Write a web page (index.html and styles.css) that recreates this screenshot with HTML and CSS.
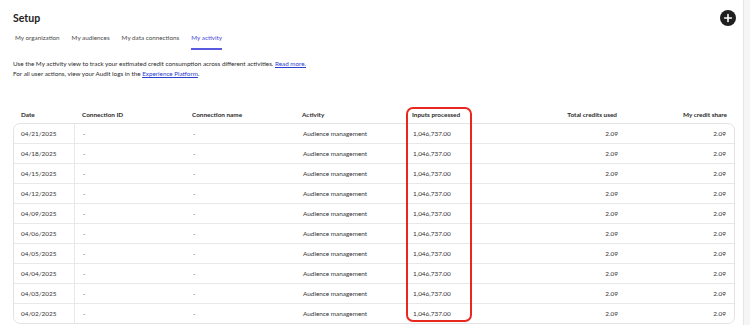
FILE: index.html
```html
<!DOCTYPE html>
<html lang="en">
<head>
    <meta charset="UTF-8">
    <title>Setup - My activity</title>
    <link rel="stylesheet" href="styles.css">
</head>
<body>
<div class="page">
    <div class="top">
        <h1>Setup</h1>
        <button class="add-btn" aria-label="Add">
            <svg width="16" height="16" viewBox="0 0 16 16">
                <circle cx="8" cy="8" r="8" fill="#1f1f1f"/>
                <path d="M8 4.6v6.8M4.6 8h6.8" stroke="#fff" stroke-width="1.6" stroke-linecap="round"/>
            </svg>
        </button>
    </div>

    <nav class="tabs">
        <a>My organization</a>
        <a>My audiences</a>
        <a>My data connections</a>
        <a class="active">My activity</a>
    </nav>

    <p class="intro">
        Use the My activity view to track your estimated credit consumption across different activities. <a href="#">Read more.</a><br>
        For all user actions, view your Audit logs in the <a href="#">Experience Platform</a>.
    </p>

    <div class="activity">
        <div class="row head">
            <div>Date</div>
            <div>Connection ID</div>
            <div>Connection name</div>
            <div>Activity</div>
            <div>Inputs processed</div>
            <div class="num">Total credits used</div>
            <div class="num">My credit share</div>
        </div>
        <div class="body" id="rows"></div>
        <div class="highlight"></div>
    </div>
</div>
<div class="side"></div>

<script>
    const dates = ["04/21/2025", "04/18/2025", "04/15/2025", "04/12/2025", "04/09/2025",
        "04/06/2025", "04/05/2025", "04/04/2025", "04/03/2025", "04/02/2025"];

    const rows = document.getElementById('rows');
    dates.forEach(d => {
        const r = document.createElement('div');
        r.className = 'row';
        r.innerHTML = `<div>${d}</div><div>-</div><div>-</div><div>Audience management</div>` +
            `<div>1,046,737.00</div><div class="num">2.09</div><div class="num">2.09</div>`;
        rows.appendChild(r);
    });
</script>
</body>
</html>
```

FILE: styles.css
```css
* {
    box-sizing: border-box;
}
body {
    margin: 0;
    font-family: Lato, "Open Sans", sans-serif;
    color: #222;
    background: #fff;
    overflow: hidden;
}
.page {
    width: 735px;
    padding: 0 0 0 13px;
}
.side {
    position: fixed;
    top: 0;
    right: 0;
    width: 7px;
    height: 100%;
    background: #f5f5f5;
    border-left: 1px solid #e6e6e6;
}
.top {
    display: flex;
    align-items: center;
    justify-content: space-between;
    height: 35px;
    padding-top: 1px;
}
h1 {
    margin: 0;
    font-size: 10.5px;
    font-weight: 700;
    color: #222;
}
.add-btn {
    border: 0;
    background: none;
    padding: 0;
    width: 16px;
    height: 16px;
    display: block;
    margin-right: -1px;
}
.tabs {
    display: flex;
    gap: 12px;
    padding-left: 2px;
    font-size: 6.3px;
    color: #4b4b4b;
    margin-top: -1px;
}
.tabs a {
    padding: 0 0 7px;
    border-bottom: 2px solid transparent;
}
.tabs a.active {
    color: #4b4bd4;
    border-bottom-color: #5a5ae0;
}
.intro {
    margin: 9px 0 0;
    font-size: 6.3px;
    line-height: 10px;
    color: #2c2c2c;
}
.intro a {
    color: #2b3fd0;
}
.activity {
    position: relative;
    margin-top: 26px;
}
.row {
    display: grid;
    grid-template-columns: 61px 110px 110px 110px 110px 110px 1fr;
    height: 20px;
    font-size: 6.4px;
    color: #333;
}
.row > div {
    padding: 0 8px;
    display: flex;
    align-items: center;
}
.row > .num {
    justify-content: flex-end;
}
.row > .num:nth-child(6) {
    padding-right: 7px;
}
.row.head {
    font-weight: 700;
    color: #2a2a2a;
    height: 18px;
}
.body {
    border: 1px solid #e3e3e3;
    border-radius: 7px;
}
.body .row {
    border-top: 1px solid #e8e8e8;
}
.body .row:first-child {
    border-top: 0;
    height: 19px;
}
.body .row > div:first-child {
    border-right: 1px solid #e8e8e8;
    padding-left: 7px;
}
.highlight {
    position: absolute;
    left: 393px;
    top: 2px;
    width: 66px;
    height: 215px;
    border: 2px solid #e8281e;
    border-radius: 7px;
}
```
